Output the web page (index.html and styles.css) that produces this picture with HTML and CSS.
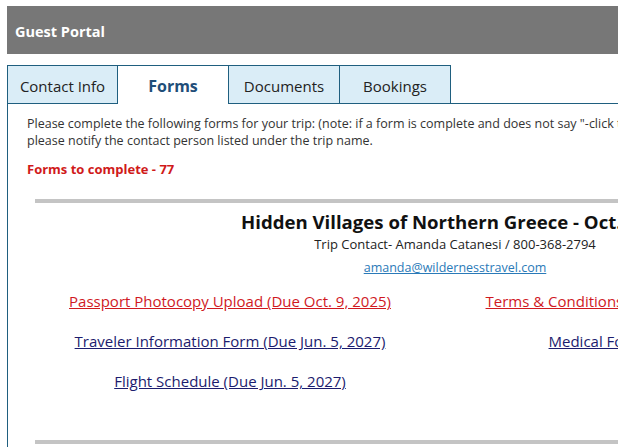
FILE: index.html
```html
<!DOCTYPE html>
<html>
<head>
<meta charset="utf-8">
<link rel="stylesheet" href="styles.css">
</head>
<body>
<div class="page">
  <div class="topbar">Guest Portal</div>
  <div class="tabs">
    <div class="tab">Contact Info</div>
    <div class="tab active">Forms</div>
    <div class="tab">Documents</div>
    <div class="tab">Bookings</div>
    <div class="tab-fill"></div>
  </div>
  <div class="panel">
    <p class="intro">Please complete the following forms for your trip: (note: if a form is complete and does not say "-click to edit" please notify the contact person listed under the trip name.</p>
    <p class="count">Forms to complete - 77</p>
    <div class="trip">
      <div class="rule"></div>
      <h2 class="trip-title">Hidden Villages of Northern Greece - Oct. 2025</h2>
      <div class="contact">Trip Contact- Amanda Catanesi / 800-368-2794</div>
      <div class="email"><a href="#">amanda@wildernesstravel.com</a></div>
      <div class="forms">
        <a class="form red" href="#">Passport Photocopy Upload (Due Oct. 9, 2025)</a>
        <a class="form red" href="#">Terms &amp; Conditions Agreement (Due Oct. 9, 2025)</a>
        <a class="form navy" href="#">Traveler Information Form (Due Jun. 5, 2027)</a>
        <a class="form navy" href="#">Medical Form (Due Jun. 5, 2027)</a>
        <a class="form navy" href="#">Flight Schedule (Due Jun. 5, 2027)</a>
      </div>
      <div class="rule bottom"></div>
    </div>
  </div>
</div>
</body>
</html>
```

FILE: styles.css
```css
html, body {
  margin: 0;
  padding: 0;
  background: #fff;
  overflow: hidden;
}
body {
  font-family: "Open Sans", "Noto Sans", "Liberation Sans", sans-serif;
  color: #222;
}
.page {
  padding: 6px 0 0 7px;
  width: 1200px;
}
.topbar {
  height: 48px;
  background: #777777;
  color: #fff;
  font-weight: 700;
  font-size: 14.5px;
  display: flex;
  align-items: center;
  padding: 2px 0 0 8px;
  box-sizing: border-box;
}
.tabs {
  display: flex;
  margin-top: 11px;
  height: 39px;
}
.tab {
  width: 111px;
  box-sizing: border-box;
  border: 1px solid #1f5f7f;
  border-left: none;
  background: #daedf7;
  font-size: 15px;
  color: #222;
  display: flex;
  align-items: center;
  justify-content: center;
  padding-top: 2px;
}
.tab:first-child {
  border-left: 1px solid #1f5f7f;
}
.tab.active {
  background: #fff;
  border-bottom: none;
  font-weight: 700;
  color: #1f4e79;
  font-size: 16px;
}
.tab-fill {
  flex: 1;
  border-bottom: 1px solid #1f5f7f;
}
.panel {
  border-left: 1px solid #1f5f7f;
  padding: 11px 0 0 19px;
  height: 400px;
}
.intro {
  margin: 0;
  font-size: 12.5px;
  line-height: 17px;
  color: #333;
  width: 640px;
}
.count {
  margin: 11px 0 0;
  font-size: 13px;
  font-weight: 700;
  color: #d01a1a;
}
.trip {
  width: 840px;
  margin: 21px 0 0 8px;
  text-align: center;
}
.rule {
  height: 4px;
  background: #c4c4c4;
}
.trip-title {
  margin: 6px 0 0;
  font-size: 18.6px;
  font-weight: 700;
  color: #111;
  line-height: 26px;
}
.contact {
  font-size: 13px;
  color: #222;
  line-height: 18px;
}
.email {
  margin-top: 6px;
  font-size: 12.5px;
  line-height: 17px;
}
.email a {
  color: #2a7ab8;
}
.forms {
  display: grid;
  grid-template-columns: 390px 468px;
  row-gap: 18px;
  margin-top: 14px;
  justify-items: center;
}
.form {
  font-size: 15px;
  line-height: 22px;
}
.red { color: #d0191f; }
.navy { color: #1c1c6e; }
.rule.bottom {
  margin-top: 48px;
}
```
